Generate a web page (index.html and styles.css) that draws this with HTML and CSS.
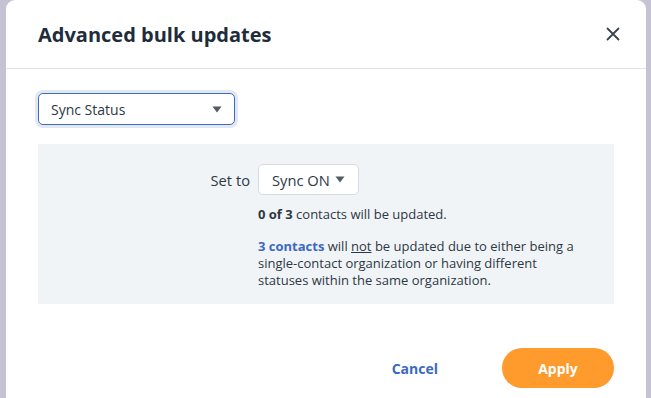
FILE: index.html
```html
<!DOCTYPE html>
<html lang="en">
<head>
    <meta charset="UTF-8">
    <meta name="viewport" content="width=device-width, initial-scale=1.0">
    <title>Advanced bulk updates</title>
    <link rel="stylesheet" href="styles.css">
</head>
<body>
    <div class="modal">
        <div class="modal-header">
            <h1 class="modal-title">Advanced bulk updates</h1>
            <button class="close" aria-label="Close">
                <svg width="14" height="14" viewBox="0 0 14 14">
                    <path d="M1.5 1.5 L12.5 12.5 M12.5 1.5 L1.5 12.5" stroke="#3a434d" stroke-width="1.8" stroke-linecap="round" fill="none"/>
                </svg>
            </button>
        </div>
        <div class="modal-body">
            <div class="select field-select">
                <span>Sync Status</span>
                <svg class="caret" width="10" height="7" viewBox="0 0 10 7"><path d="M0.5 0.5 H9.5 L5 6.5 Z" fill="#555b63"/></svg>
            </div>

            <div class="panel">
                <div class="set-row">
                    <label class="set-label">Set to</label>
                    <div class="select value-select">
                        <span>Sync ON</span>
                        <svg class="caret" width="10" height="7" viewBox="0 0 10 7"><path d="M0.5 0.5 H9.5 L5 6.5 Z" fill="#555b63"/></svg>
                    </div>
                </div>
                <div class="notes">
                    <p><strong>0 of 3</strong> contacts will be updated.</p>
                    <p><a href="#" class="link">3 contacts</a> will <u>not</u> be updated due to either being a single-contact organization or having different statuses within the same organization.</p>
                </div>
            </div>
        </div>
        <div class="modal-footer">
            <button class="btn-cancel">Cancel</button>
            <button class="btn-apply">Apply</button>
        </div>
    </div>
</body>
</html>
```

FILE: styles.css
```css
html, body {
    height: 100%;
}

body {
    margin: 0;
    background: #c5c3d3;
    font-family: 'Open Sans', 'Noto Sans', sans-serif;
    color: #2d3845;
    overflow: hidden;
}

.modal {
    width: 640px;
    margin: 0 6px;
    min-height: 100%;
    background: #fff;
    border-radius: 9px 9px 0 0;
}

.modal-header {
    display: flex;
    align-items: center;
    justify-content: space-between;
    height: 68px;
    padding: 0 26px 0 32px;
    border-bottom: 1px solid #dfe5ea;
}

.modal-title {
    margin: 0;
    font-size: 20px;
    font-weight: 700;
    color: #1f2c3b;
}

.close {
    border: none;
    background: none;
    padding: 0;
    display: flex;
    cursor: pointer;
}

.modal-body {
    padding: 24px 32px 0;
}

.select {
    box-sizing: border-box;
    display: flex;
    align-items: center;
    justify-content: space-between;
    background: #fff;
    border-radius: 5px;
    font-size: 14px;
    color: #2d3845;
}

.field-select {
    width: 197px;
    height: 32px;
    padding: 0 12px 0 12px;
    border: 1px solid #3c6cc2;
    box-shadow: 0 0 0 3px #e2e7f1;
}

.panel {
    margin-top: 19px;
    width: 576px;
    box-sizing: border-box;
    background: #f1f4f7;
    padding: 20px 0 15px;
}

.set-row {
    display: flex;
    align-items: center;
}

.set-label {
    width: 212px;
    text-align: right;
    margin-right: 8px;
    font-size: 14.7px;
}

.value-select {
    width: 101px;
    height: 31px;
    padding: 0 13px 0 13px;
    border: 1px solid #d7dce2;
    font-size: 14.7px;
}

.notes {
    margin-left: 220px;
    margin-top: 11px;
    font-size: 13px;
    line-height: 17px;
    width: 322px;
}

.notes p {
    margin: 0 0 15px;
}

.notes p:last-child {
    margin-bottom: 0;
}

.link {
    color: #3b69c1;
    font-weight: 700;
    text-decoration: none;
}

.modal-footer {
    display: flex;
    justify-content: flex-end;
    align-items: center;
    gap: 40px;
    padding: 44px 32px 0;
}

.btn-cancel {
    border: none;
    background: none;
    padding: 0 24px;
    font-family: inherit;
    font-size: 14px;
    font-weight: 700;
    color: #3b69c1;
    cursor: pointer;
}

.btn-apply {
    width: 112px;
    height: 40px;
    border: none;
    border-radius: 20px;
    background: #ff9a2c;
    color: #fff;
    font-family: inherit;
    font-size: 14px;
    font-weight: 700;
    cursor: pointer;
}
```
